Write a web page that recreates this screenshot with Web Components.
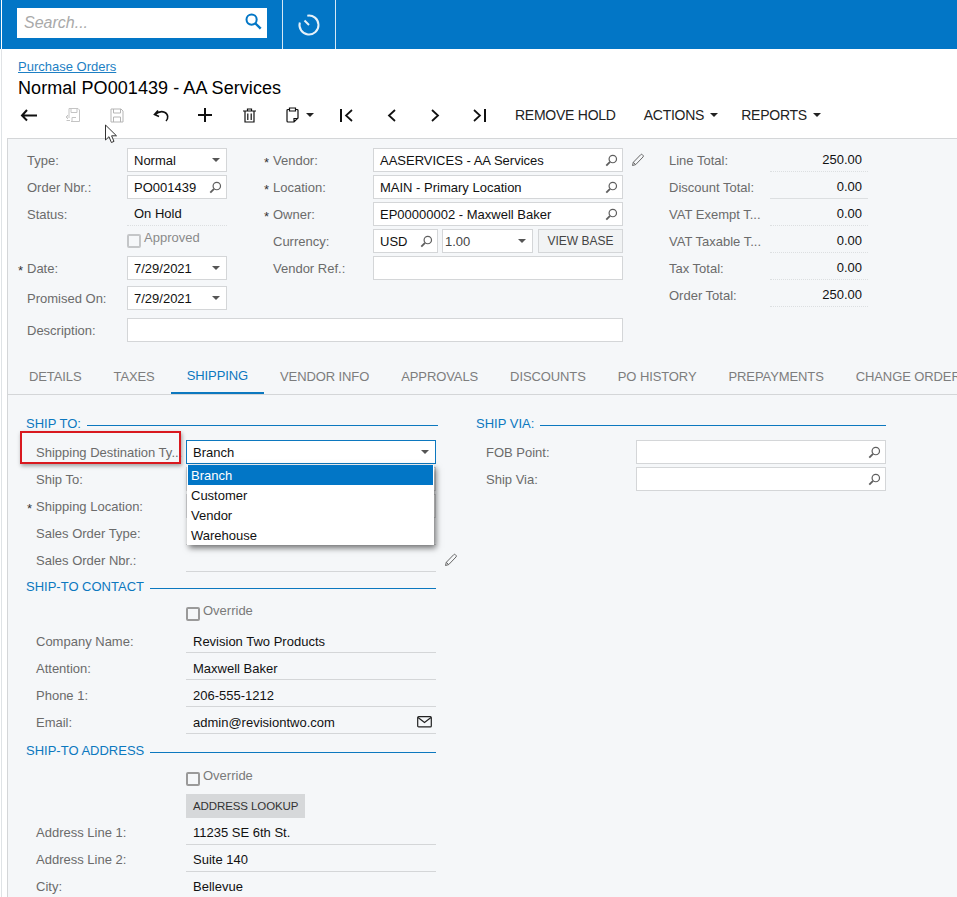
<!DOCTYPE html>
<html><head><meta charset="utf-8"><style>
html,body{margin:0;padding:0;background:#fff;height:100%;overflow:hidden}
body{font:13px "Liberation Sans",Arial,sans-serif;color:#000}
</style></head><body>
<po-page>
  <po-header slot="header"></po-header>
  <po-crumb slot="crumb" title-text="Normal PO001439 - AA Services">Purchase Orders</po-crumb>
  <po-toolbar slot="toolbar"></po-toolbar>
  <po-summary slot="summary"></po-summary>
  <po-tabs slot="tabs"></po-tabs>
  <po-shipping slot="content"></po-shipping>
</po-page>
<script>
const ICON={
 search:'<svg width="13" height="13" viewBox="0 0 14 14" fill="none" stroke="#5f5f5f"><circle cx="8.4" cy="5.4" r="4" stroke-width="1.3"/><path d="M5.4 8.4 1.4 12.6" stroke-width="2"/></svg>',
 pencil:'<svg width="14" height="14" viewBox="0 0 14 14" fill="none" stroke="#666" stroke-width="1"><path d="M1.5 12.5l.8-3.2 7.4-7.6a1.2 1.2 0 0 1 1.7 0l.6.6a1.2 1.2 0 0 1 0 1.7L4.7 11.6z"/><path d="M2.3 9.3l2.4 2.3"/></svg>',
 mail:'<svg width="15" height="12" viewBox="0 0 15 12" fill="none" stroke="#222" stroke-width="1.2"><rect x=".7" y=".7" width="13.6" height="10.2" rx="1"/><path d="M1 1.5l6.5 5 6.5-5"/></svg>',
 caret:'<svg width="8" height="4" viewBox="0 0 8 4"><path d="M0 0h8L4 4z" fill="#555"/></svg>',
 caretD:'<svg width="8" height="4" viewBox="0 0 8 4"><path d="M0 0h8L4 4z" fill="#222"/></svg>'
};
function def(name,css,html){
 customElements.define(name,class extends HTMLElement{
  connectedCallback(){
   if(this.shadowRoot)return;
   const r=this.attachShadow({mode:'open'});
   r.innerHTML='<style>'+css+'</style>'+(typeof html==='function'?html(this):html);
  }
 });
}
def('po-page',`
 :host{display:block;width:957px;height:897px;position:relative;overflow:hidden;background:#fff}
 .main{margin-left:1px;border-left:1px solid #dfe3e6;height:848px;padding-left:5px;box-sizing:border-box;overflow:hidden}
`,`<div><slot name="header"></slot></div>
 <div class="main"><slot name="crumb"></slot><slot name="toolbar"></slot><slot name="summary"></slot><slot name="tabs"></slot><slot name="content"></slot></div>`);

def('po-header',`
 :host{display:flex;height:49px;background:#0276c6;position:relative}
 .gap{width:1px;background:#fff;margin-left:1px}
 .s{width:281px;padding:8px 0 0 15px;box-sizing:border-box;border-right:1px solid #d5e8f5}
 .box{width:250px;height:30px;background:#fff;display:flex;align-items:center;justify-content:space-between;padding:0 5px 0 7px;box-sizing:border-box;font:italic 16px "Liberation Sans",Arial,sans-serif;color:#a9a9a9}
 .t{width:53px;border-right:1px solid #d5e8f5;display:flex;align-items:center;justify-content:center;padding-right:1px;box-sizing:border-box}
`,`<div class="gap"></div><div class="s"><div class="box"><span>Search...</span>
 <svg width="17" height="17" viewBox="0 0 17 17" fill="none" stroke="#0276c6" style="margin-top:-3px"><circle cx="6.6" cy="6.6" r="5.1" stroke-width="2"/><path d="M10.5 10.5l5.2 5.2" stroke-width="2.4"/></svg></div></div>
 <div class="t"><svg width="24" height="24" viewBox="0 0 24 24" fill="none" stroke="#e6f1f9" stroke-width="2"><path d="M2.82 9.54A9.5 9.5 0 1 0 10.3 2.65"/><path d="M12 12 7.500 7.500"/></svg></div>`);

def('po-crumb',`
 :host{display:block;padding:10px 0 0 11px;height:43px;box-sizing:content-box}
 a{display:block;color:#1d7fc4;text-decoration:underline;font-size:13px;line-height:15px}
 h1{margin:3px 0 0;font-weight:400;font-size:18px;line-height:22px;color:#000;letter-spacing:.07px}
`,h=>`<a><slot></slot></a><h1>${h.getAttribute('title-text')}</h1>`);

def('po-toolbar',`
 :host{display:flex;height:36px;padding-bottom:10px;align-items:center;position:relative;box-sizing:border-box;color:#222;font-size:14px;letter-spacing:-.25px}
 .b{width:44px;height:26px;display:flex;align-items:center;justify-content:center;flex:none}
 .w{width:54px;justify-content:flex-start;padding-left:15px;box-sizing:border-box;gap:7px}
 .t{display:flex;align-items:center;gap:6px;white-space:nowrap}
 svg{display:block}
 .c{position:absolute;left:97px;top:22px;z-index:5}
`,`
 <div class="b"><svg width="18" height="14" viewBox="0 0 18 14" fill="none" stroke="#111" stroke-width="2"><path d="M17 7.500H2M7 2 2 7.500 7 12.500"/></svg></div>
 <div class="b"><svg width="16" height="16" viewBox="0 0 16 16" fill="none" stroke="#c4c4c4"><path d="M4 9V1.500h9l1.500 1.500v11.500H6"/><path d="M6 1.500v4h6v-4M7 14.500v-4h4"/><path d="M5 10H1.500M3 8l-2 2 2 2M1.500 13.500H5"/></svg></div>
 <div class="b"><svg width="14" height="15" viewBox="0 0 14 15" fill="none" stroke="#b5b5b5"><path d="M1 1h10l2 2v11H1z"/><path d="M3.500 1v4h7V1M3.500 14V9h7v5"/></svg></div>
 <div class="b"><svg width="17" height="13" viewBox="0 0 17 13" fill="none" stroke="#111" stroke-width="1.600"><path d="M5 1.500 1.500 5.500 6 7.500M2 5.500C5 3 8.500 2 11.500 3.200 15.500 5 15.500 9.500 13 12"/></svg></div>
 <div class="b"><svg width="16" height="16" viewBox="0 0 16 16" stroke="#111" stroke-width="2"><path d="M8 1v14M1 8h14"/></svg></div>
 <div class="b"><svg width="13" height="15" viewBox="0 0 13 15" fill="none" stroke="#111" stroke-width="1.200"><path d="M0 3h13M4.500 3V1h4v2M2 3v11h9V3M4.800 5.500v6.500M8.200 5.500v6.500"/></svg></div>
 <div class="b w"><svg width="13" height="16" viewBox="0 0 13 16" fill="none" stroke="#111" stroke-width="1.200"><path d="M3.500 2.500H2a1 1 0 0 0-1 1v10.500a1 1 0 0 0 1 1h6l4-4V3.500a1 1 0 0 0-1-1H9.500M3.500 1h6v3h-6zM8 15v-3.500h4"/></svg>${ICON.caretD}</div>
 <div class="b"><svg width="16" height="13" viewBox="0 0 16 13" fill="none" stroke="#111" stroke-width="2"><path d="M2 0v13"/><path d="M13 1 7 6.500l6 5.500" stroke-width="1.700"/></svg></div>
 <div class="b"><svg width="9" height="13" viewBox="0 0 9 13" fill="none" stroke="#111" stroke-width="1.800"><path d="M8 1 2 6.500 8 12"/></svg></div>
 <div class="b"><svg width="9" height="13" viewBox="0 0 9 13" fill="none" stroke="#111" stroke-width="1.800"><path d="M1 1l6 5.500L1 12"/></svg></div>
 <div class="b"><svg width="16" height="13" viewBox="0 0 16 13" fill="none" stroke="#111" stroke-width="2"><path d="M14 0v13"/><path d="M3 1l6 5.500L3 12" stroke-width="1.700"/></svg></div>
 <span class="t" style="margin-left:14px;margin-right:28px">REMOVE HOLD</span>
 <span class="t" style="margin-right:23px">ACTIONS ${ICON.caretD}</span>
 <span class="t">REPORTS ${ICON.caretD}</span>
 <svg class="c" width="14" height="20" viewBox="0 0 14 20" fill="#fff" stroke="#333"><path d="M1.500 1v15l3.500-3.300 2.400 5.800 2.600-1.100-2.400-5.600H12.500z"/></svg>
`);

def('po-field',`
 :host{display:grid;grid-template-columns:var(--lw,100px) var(--fw,100px);height:24px;margin-bottom:var(--mb,3px);align-items:center;position:relative;font-size:13px;--bd:#d4d6d8}
 .l{color:#6b6b6b;white-space:nowrap;position:relative;padding-bottom:var(--lb,0)}
 .star{position:absolute;left:-9px;top:2px;color:#333;font-size:13px}
 .f{height:24px;box-sizing:border-box;border:1px solid var(--bd);background:#fff;display:flex;align-items:center;justify-content:space-between;padding:var(--vp,0) 4px 0 6px;color:#111;white-space:nowrap;gap:4px}
 :host([flat]) .f{background:transparent;border:0;border-bottom:1px solid var(--bd);padding-left:7px}
 :host([dotted]) .f{background:transparent;border:0;border-bottom:1px dotted #dcdfe1;padding-left:7px}
 :host([focus]) .f{border-color:#0c78bf}
 svg{display:block;flex:none}
 .x{position:absolute;left:calc(var(--pl,0px) + var(--lw,100px) + var(--fw,100px) + 8px);top:5px}
`,h=>{
 const k=h.getAttribute('kind');
 const ic=k==='search'?ICON.search:k==='select'?'<span style="margin-right:2px">'+ICON.caret+'</span>':k==='mail'?ICON.mail:'';
 const req=h.hasAttribute('required')?'<span class="star">*</span>':'';
 const extra=h.hasAttribute('edit')?'<span class="x">'+ICON.pencil+'</span>':'';
 return `<div class="l">${req}${h.getAttribute('label')||''}</div><div class="f"><span><slot></slot></span>${ic}</div>${extra}`;
});

def('po-check',`
 :host{display:block;height:var(--h,27px);font-size:13px;color:var(--tc,#7a7a7a);position:relative}
 i{position:absolute;left:0;top:var(--t,6px);width:10px;height:10px;border:2px solid var(--bc,#9a9a9a);border-radius:2px}
 span{position:absolute;left:17px;top:calc(var(--t,6px) - 4px)}
`,`<i></i><span><slot></slot></span>`);

def('po-summary',`
 :host{display:block;height:224px;background:#f5f7f9;border-top:1px solid #d4d6d8;box-shadow:inset 1px 0 0 #d4d6d8;box-sizing:border-box;position:relative}
 .wrap{display:grid;grid-template-columns:246px 396px 1fr;padding:9px 0 0 20px}
 .c1{--lw:100px;--fw:100px}
 .c2{--lw:100px;--fw:250px}
 .rowx{display:flex;height:24px;margin-bottom:3px;align-items:center;color:#6b6b6b}
 .rowx>span{width:100px}
 .u,.s2,.b{height:24px;box-sizing:border-box;border:1px solid #d4d6d8;background:#fff;display:flex;align-items:center;justify-content:space-between;color:#111;white-space:nowrap;flex:none}
 .u{width:65px;padding:0 4px 0 6px}
 .s2{width:91px;margin-left:4px;padding:0 6px 0 2px;color:#444}
 .b{width:85px;margin-left:5px;background:#f1f3f4;justify-content:center;padding:0;color:#444;font-size:12px}
 svg{display:block}
 .desc{position:absolute;left:20px;top:179px;--lw:100px;--fw:496px}
 .t{display:grid;grid-template-columns:101px 98px;height:24px;margin-bottom:3px;align-items:center;color:#6b6b6b;white-space:nowrap}
 .t b{font-weight:400;color:#111;text-align:right;padding-right:6px;height:24px;line-height:24px;border-bottom:1px dotted #dcdfe1;box-sizing:border-box}
 .t b.solid{border-bottom:1px solid #dcdfe1}
`,`<div class="wrap">
 <div class="c1">
  <po-field label="Type:" kind="select">Normal</po-field>
  <po-field label="Order Nbr.:" kind="search">PO001439</po-field>
  <po-field label="Status:" dotted>On Hold</po-field>
  <div style="padding-left:100px"><po-check style="--t:5px;--h:27px;--bc:#c4c6c8;--tc:#8a8a8a">Approved</po-check></div>
  <po-field label="Date:" kind="select" required style="--mb:6px">7/29/2021</po-field>
  <po-field label="Promised On:" kind="select">7/29/2021</po-field>
 </div>
 <div class="c2">
  <po-field label="Vendor:" kind="search" required edit>AASERVICES - AA Services</po-field>
  <po-field label="Location:" kind="search" required>MAIN - Primary Location</po-field>
  <po-field label="Owner:" kind="search" required>EP00000002 - Maxwell Baker</po-field>
  <div class="rowx"><span>Currency:</span><div class="u">USD ${ICON.search}</div><div class="s2">1.00 ${ICON.caret}</div><div class="b">VIEW BASE</div></div>
  <po-field label="Vendor Ref.:"></po-field>
 </div>
 <div>
  <div class="t">Line Total:<b>250.00</b></div>
  <div class="t">Discount Total:<b class="solid">0.00</b></div>
  <div class="t">VAT Exempt T...<b>0.00</b></div>
  <div class="t">VAT Taxable T...<b>0.00</b></div>
  <div class="t">Tax Total:<b>0.00</b></div>
  <div class="t">Order Total:<b>250.00</b></div>
 </div>
 </div>
 <div class="desc"><po-field label="Description:"></po-field></div>`);

def('po-tabs',`
 :host{display:flex;height:33px;border-bottom:1px solid #d4d6d8;box-shadow:inset 1px 0 0 #d4d6d8;box-sizing:border-box;background:#f5f7f9;font-size:13px;letter-spacing:-.1px;color:#7d7d7d;white-space:nowrap;overflow:hidden;padding-left:6px}
 span{padding:0 16px;line-height:29px;height:32px;box-sizing:border-box;flex:none}
 .on{color:#0c78bf;border-bottom:3px solid #0c78bf;line-height:27px;height:33px}
`,`<span>DETAILS</span><span>TAXES</span><span class="on">SHIPPING</span><span>VENDOR INFO</span><span>APPROVALS</span><span>DISCOUNTS</span><span>PO HISTORY</span><span>PREPAYMENTS</span><span>CHANGE ORDERS</span>`);

def('po-section',`
 :host{display:flex;align-items:center;height:var(--sh,24px);color:#0c78bf;font-size:13px;white-space:nowrap;gap:6px;padding-left:19px;margin-bottom:var(--smb,5px)}
 i{flex:1;border-top:1px solid #0c78bf;margin-top:4px}
`,`<slot></slot><i></i>`);

def('po-shipping',`
 :host{display:grid;grid-template-columns:450px 450px;background:#f5f7f9;box-shadow:inset 1px 0 0 #d4d6d8;height:503px;padding-top:16px;box-sizing:border-box;position:relative;--pl:29px}
 .l{--lw:150px;--fw:250px}
 po-field{padding-left:29px;box-sizing:content-box;grid-template-columns:150px 250px}
 .r po-section{width:410px}
 .l po-section{width:410px}
 .l po-section.first{width:412px}
 .r{--lw:150px;--fw:250px}
 .dd{position:absolute;left:180px;top:70px;width:247px;height:80px;background:#fff;box-shadow:2px 3px 6px rgba(0,0,0,.55);z-index:3;line-height:21px;color:#111;font-size:13px}
 .dd div{height:20px;padding-left:4px}
 .dd .on{background:#0276c6;color:#fff;margin:0 1px;padding-left:3px}
 .red{position:absolute;left:13px;top:36px;width:157px;height:29px;border:2px solid #d9191f;box-shadow:1px 2px 4px rgba(0,0,0,.35);z-index:4}
 .btnrow{padding-left:179px;height:27px}
 .btn{display:inline-flex;align-items:center;height:24px;padding:0 7px;background:#d6d8da;color:#333;font-size:11.5px;letter-spacing:-.1px;vertical-align:top}
 .ck{padding-left:179px}
 .contact{--vp:1px}
 .address{--lb:2px}
`,`
 <div class="l">
  <po-section class="first">SHIP TO:</po-section>
  <po-field label="Shipping Destination Ty..." kind="select" focus>Branch</po-field>
  <po-field label="Ship To:" kind="select"></po-field>
  <po-field label="Shipping Location:" required kind="select"></po-field>
  <po-field label="Sales Order Type:" flat></po-field>
  <po-field label="Sales Order Nbr.:" flat edit></po-field>
  <po-section style="--sh:22px;--smb:0">SHIP-TO CONTACT</po-section>
  <div class="ck"><po-check style="--t:10px;--h:32px">Override</po-check></div>
  <div class="contact">
   <po-field label="Company Name:" flat>Revision Two Products</po-field>
   <po-field label="Attention:" flat>Maxwell Baker</po-field>
   <po-field label="Phone 1:" flat>206-555-1212</po-field>
   <po-field label="Email:" flat kind="mail">admin@revisiontwo.com</po-field>
  </div>
  <po-section style="--sh:26px;--smb:0">SHIP-TO ADDRESS</po-section>
  <div class="ck"><po-check style="--t:9px;--h:31px">Override</po-check></div>
  <div class="btnrow"><span class="btn">ADDRESS LOOKUP</span></div>
  <div class="address">
   <po-field label="Address Line 1:" flat>11235 SE 6th St.</po-field>
   <po-field label="Address Line 2:" flat>Suite 140</po-field>
   <po-field label="City:" flat>Bellevue</po-field>
  </div>
 </div>
 <div class="r">
  <po-section>SHIP VIA:</po-section>
  <po-field label="FOB Point:" kind="search"></po-field>
  <po-field label="Ship Via:" kind="search"></po-field>
 </div>
 <div class="dd"><div class="on">Branch</div><div>Customer</div><div>Vendor</div><div>Warehouse</div></div>
 <div class="red"></div>
`);
</script>
</body></html>
